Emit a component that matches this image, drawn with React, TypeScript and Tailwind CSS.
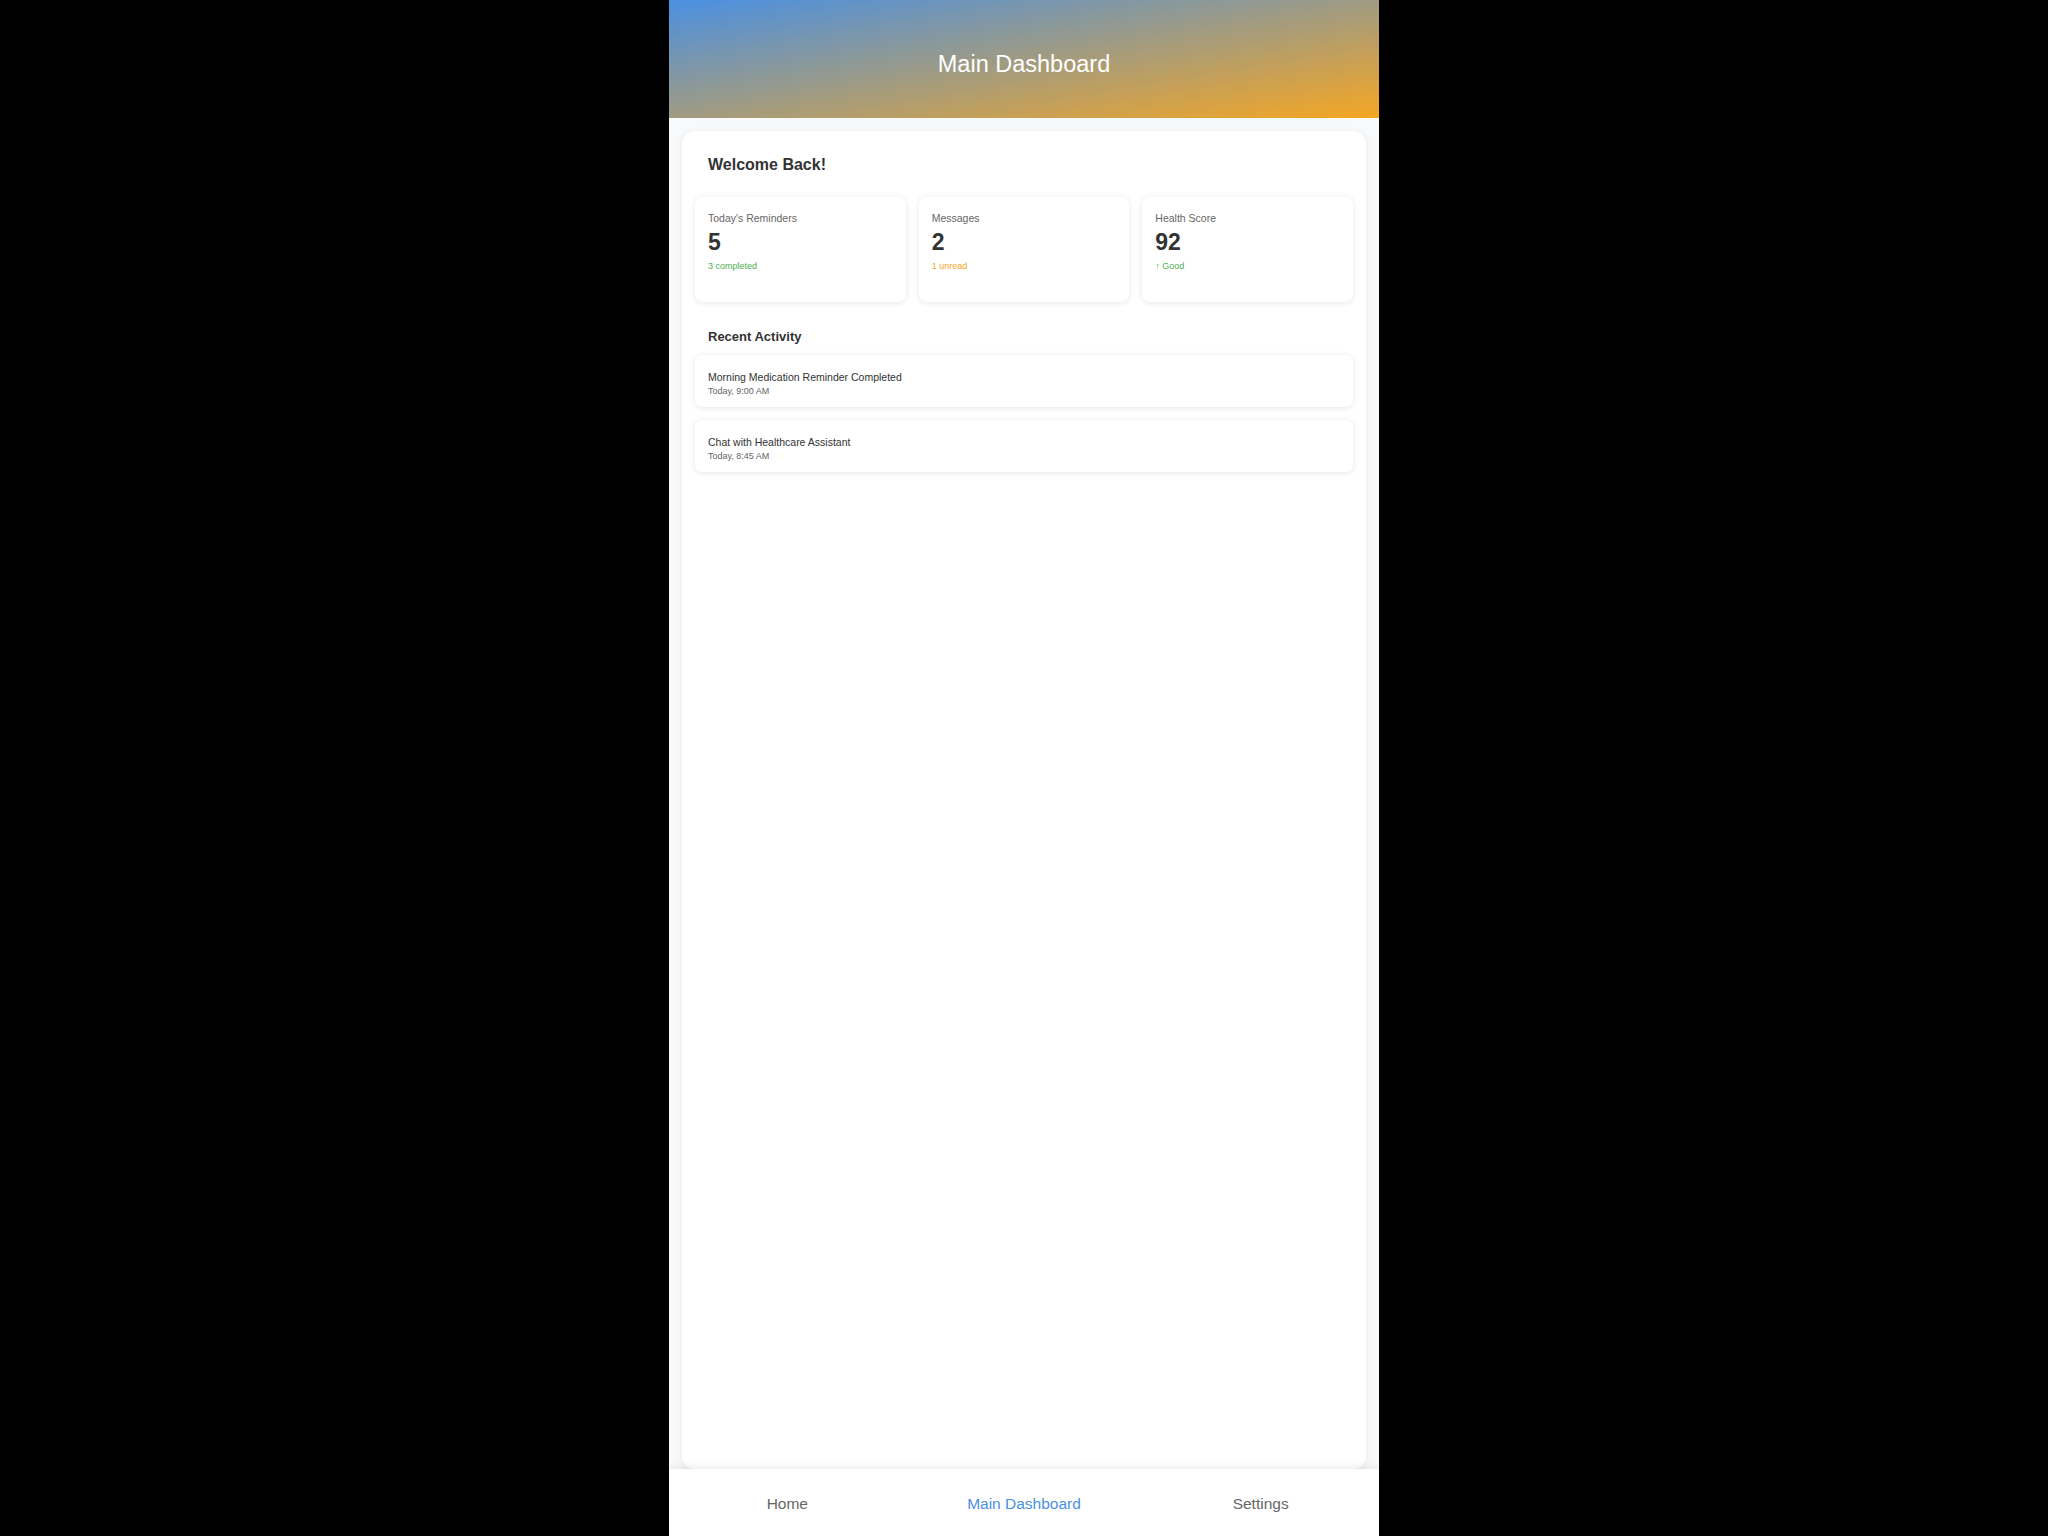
const stats = [
  { label: "Today's Reminders", value: "5", note: "3 completed", noteColor: "text-[#4caf50]" },
  { label: "Messages", value: "2", note: "1 unread", noteColor: "text-[#f5a623]" },
  { label: "Health Score", value: "92", note: "↑ Good", noteColor: "text-[#4caf50]" },
];

const activity = [
  { title: "Morning Medication Reminder Completed", time: "Today, 9:00 AM" },
  { title: "Chat with Healthcare Assistant", time: "Today, 8:45 AM" },
];

const tabs = ["Home", "Main Dashboard", "Settings"];

export default function App() {
  return (
    <div className="min-h-screen bg-black font-['Liberation_Sans',Arial,sans-serif]">
      <div className="mx-auto flex h-screen w-[710px] flex-col overflow-hidden bg-[#f8f9fa]">
        {/* header */}
        <header className="flex h-[118px] shrink-0 items-center justify-center bg-linear-to-br/srgb from-[#4a90e2] to-[#f5a623] pt-[10px]">
          <h1 className="text-[23.5px] leading-[28px] font-normal text-white">Main Dashboard</h1>
        </header>

        {/* content */}
        <main className="flex-1 overflow-hidden px-[13px] pt-[13px]">
          <div className="h-full rounded-[13px] bg-white p-[13px] shadow-[0_2px_10px_rgba(0,0,0,0.06)]">
            <h2 className="px-[13px] pt-[11px] text-[16px] leading-[19px] font-bold text-[#333]">Welcome Back!</h2>

            <div className="mt-[23px] grid grid-cols-3 gap-[13px]">
              {stats.map((s) => (
                <div
                  key={s.label}
                  className="h-[105px] rounded-[8px] bg-white p-[13px] shadow-[0_1px_6px_rgba(0,0,0,0.1)]"
                >
                  <div className="text-[10.5px] leading-[16px] text-[#666]">{s.label}</div>
                  <div className="mt-[3px] text-[23px] leading-[26px] font-bold text-[#333]">{s.value}</div>
                  <div className={`mt-[5px] text-[9px] leading-[12px] ${s.noteColor}`}>{s.note}</div>
                </div>
              ))}
            </div>

            <h3 className="mt-[27px] px-[13px] text-[13px] leading-[16px] font-bold text-[#333]">Recent Activity</h3>

            <div className="mt-[10px] flex flex-col gap-[13px]">
              {activity.map((a) => (
                <div
                  key={a.title}
                  className="rounded-[7px] bg-white px-[13px] pt-[15px] pb-[10px] shadow-[0_1px_6px_rgba(0,0,0,0.1)]"
                >
                  <div className="text-[10.5px] leading-[14px] text-[#333]">{a.title}</div>
                  <div className="mt-[1px] text-[9px] leading-[12px] text-[#666]">{a.time}</div>
                </div>
              ))}
            </div>
          </div>
        </main>

        {/* bottom nav */}
        <nav className="relative z-10 grid h-[67px] shrink-0 grid-cols-3 items-center bg-white shadow-[0_-2px_8px_rgba(0,0,0,0.08)]">
          {tabs.map((t) => (
            <div
              key={t}
              className={`pt-[2px] text-center text-[15.5px] leading-[20px] ${
                t === "Main Dashboard" ? "text-[#4a90e2]" : "text-[#666]"
              }`}
            >
              {t}
            </div>
          ))}
        </nav>
      </div>
    </div>
  );
}
